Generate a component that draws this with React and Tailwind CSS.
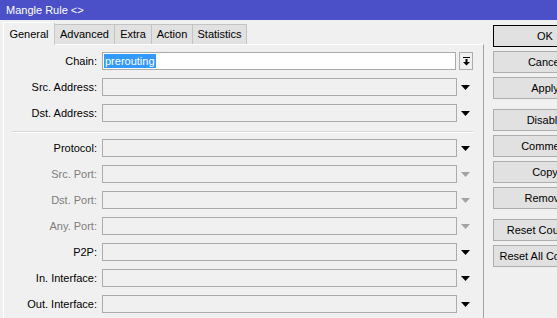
const font = { fontFamily: '"Liberation Sans", Arial, sans-serif' };

const Arrow = ({ disabled }) => (
  <div className="w-[17px] h-[18px] flex items-center justify-center">
    <svg width="9" height="5" viewBox="0 0 9 5">
      <path d="M0 0h9L4.5 5z" fill={disabled ? '#a3a3a3' : '#000'} />
    </svg>
  </div>
);

const Field = ({ label, disabled }) => (
  <div className="flex items-center h-[18px]">
    <div className={`w-[93px] text-right text-[11px] leading-none ${disabled ? 'text-[#7d7d7d]' : 'text-black'}`}>
      {label}:
    </div>
    <div className="ml-[5px] w-[355px] h-[18px] border border-[#acacac] bg-[#f0f0f0]" />
    <Arrow disabled={disabled} />
  </div>
);

const Btn = ({ children, primary, className = '' }) => (
  <div
    className={`w-[104px] h-[22px] flex items-center justify-center text-[11px] text-black bg-[#e1e1e1] border ${primary ? 'border-black' : 'border-[#adadad]'} ${className}`}
  >
    {children}
  </div>
);

const tabs = [
  { name: 'General', w: 'w-[52px]', active: true },
  { name: 'Advanced', w: 'w-[60px]' },
  { name: 'Extra', w: 'w-[37px]' },
  { name: 'Action', w: 'w-[41px]' },
  { name: 'Statistics', w: 'w-[54px]' },
];

export default function App() {
  return (
    <div className="w-[557px] h-[318px] overflow-hidden bg-[#f0f0f0] flex flex-col" style={font}>
      <div className="h-[20px] shrink-0 bg-[#4b50c8] text-white text-[11px] pl-[6px] flex items-center">
        Mangle Rule &lt;&gt;
      </div>

      <div className="flex flex-1 min-h-0">
        <div className="w-[484px] shrink-0 pl-[3px] flex flex-col">
          {/* tabs */}
          <div className="h-[24px] flex items-end">
            {tabs.map((t) =>
              t.active ? (
                <div
                  key={t.name}
                  className={`${t.w} h-[23px] -mb-px relative z-10 bg-[#f0f0f0] border-t border-l border-r border-[#c9c9c9] border-l-white border-t-white text-[11px] text-black flex items-center justify-center`}
                >
                  {t.name}
                </div>
              ) : (
                <div
                  key={t.name}
                  className={`${t.w} h-[20px] bg-[#e1e1e1] border-t border-r border-[#c3c3c3] text-[11px] text-black flex items-center justify-center`}
                >
                  {t.name}
                </div>
              )
            )}
          </div>

          {/* panel */}
          <div className="flex-1 border-t border-l border-t-white border-l-white border-r border-r-[#a0a0a0] pt-[7px] flex flex-col">
            <div className="flex items-center h-[18px]">
              <div className="w-[93px] text-right text-[11px] leading-none text-black">Chain:</div>
              <div className="ml-[5px] w-[354px] h-[18px] border border-[#a9a9a9] bg-white flex items-center pl-px">
                <span className="bg-[#3399ff] text-white text-[11px] leading-[14px] px-px">prerouting</span>
              </div>
              <div className="ml-[3px] w-[14px] h-[18px] border border-[#acacac] bg-[#f0f0f0] flex items-center justify-center">
                <svg width="7" height="9" viewBox="0 0 7 9">
                  <rect x="0" y="0" width="7" height="1" fill="#000" />
                  <rect x="2.5" y="2" width="2" height="3" fill="#000" />
                  <path d="M0 5h7L3.5 8.5z" fill="#000" />
                </svg>
              </div>
            </div>
            <div className="mt-[8px] flex flex-col gap-[8px]">
              <Field label="Src. Address" />
              <Field label="Dst. Address" />
            </div>

            <div className="ml-[8px] w-[461px] mt-[9px] border-t border-[#d7d7d7] border-b border-b-white" />

            <div className="mt-[6px] flex flex-col gap-[8px]">
              <Field label="Protocol" />
              <Field label="Src. Port" disabled />
              <Field label="Dst. Port" disabled />
              <Field label="Any. Port" disabled />
              <Field label="P2P" />
              <Field label="In. Interface" />
              <Field label="Out. Interface" />
            </div>
          </div>
        </div>

        {/* buttons */}
        <div className="shrink-0 ml-[9px] pt-[5px] flex flex-col gap-[4px]">
          <Btn primary>OK</Btn>
          <Btn>Cancel</Btn>
          <Btn>Apply</Btn>
          <Btn className="mt-[6px]">Disable</Btn>
          <Btn>Comment</Btn>
          <Btn>Copy</Btn>
          <Btn>Remove</Btn>
          <Btn className="mt-[6px]">Reset Counters</Btn>
          <Btn>Reset All Counters</Btn>
        </div>
      </div>
    </div>
  );
}
